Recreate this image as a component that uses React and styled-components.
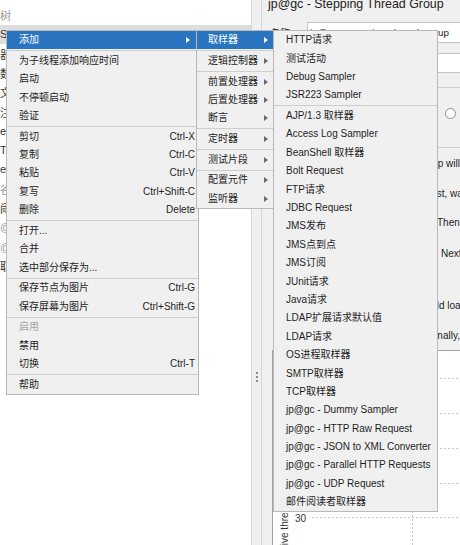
import React from "react";
import styled, { createGlobalStyle } from "styled-components";

const GlobalStyle = createGlobalStyle`
  html, body {
    margin: 0;
    padding: 0;
    background: #fff;
  }
  body {
    font-family: "Liberation Sans", "Noto Sans CJK SC", sans-serif;
  }
`;

const treeRows = [
  { text: "树", muted: true },
  { text: "Stepping Thread Group", selected: true },
  { text: "器" },
  { text: "数" },
  { text: "文" },
  { text: "注" },
  { text: "ea" },
  { text: "T" },
  { text: "ea" },
  { text: "谷", muted: true },
  { text: "阈" },
  { text: "@", muted: true },
  { text: "@", muted: true },
  { text: "取" },
];

const scheduleLines = [
  { text: "This group will start", gap: 5, indent: 128 },
  { text: "First, wait for", gap: 10, indent: 157 },
  { text: "Then start", gap: 9, indent: 169 },
  { text: "Next, add", gap: 11, indent: 173 },
  { text: "Then hold load for", gap: 32, indent: 132 },
  { text: "Finally, stop", gap: 10, indent: 161 },
];

const contextMenu = [
  { label: "添加", arrow: true, active: true },
  "sep",
  { label: "为子线程添加响应时间" },
  { label: "启动" },
  { label: "不停顿启动" },
  { label: "验证" },
  "sep",
  { label: "剪切", shortcut: "Ctrl-X" },
  { label: "复制", shortcut: "Ctrl-C" },
  { label: "粘贴", shortcut: "Ctrl-V" },
  { label: "复写", shortcut: "Ctrl+Shift-C" },
  { label: "删除", shortcut: "Delete" },
  "sep",
  { label: "打开..." },
  { label: "合并" },
  { label: "选中部分保存为..." },
  "sep",
  { label: "保存节点为图片", shortcut: "Ctrl-G" },
  { label: "保存屏幕为图片", shortcut: "Ctrl+Shift-G" },
  "sep",
  { label: "启用", disabled: true },
  { label: "禁用" },
  { label: "切换", shortcut: "Ctrl-T" },
  "sep",
  { label: "帮助" },
];

const addMenu = [
  { label: "取样器", arrow: true, active: true },
  "sep",
  { label: "逻辑控制器", arrow: true },
  "sep",
  { label: "前置处理器", arrow: true },
  { label: "后置处理器", arrow: true },
  { label: "断言", arrow: true },
  "sep",
  { label: "定时器", arrow: true },
  "sep",
  { label: "测试片段", arrow: true },
  "sep",
  { label: "配置元件", arrow: true },
  { label: "监听器", arrow: true },
];

const samplerMenu = [
  { label: "HTTP请求" },
  { label: "测试活动" },
  { label: "Debug Sampler" },
  { label: "JSR223 Sampler" },
  "sep",
  { label: "AJP/1.3 取样器" },
  { label: "Access Log Sampler" },
  { label: "BeanShell 取样器" },
  { label: "Bolt Request" },
  { label: "FTP请求" },
  { label: "JDBC Request" },
  { label: "JMS发布" },
  { label: "JMS点到点" },
  { label: "JMS订阅" },
  { label: "JUnit请求" },
  { label: "Java请求" },
  { label: "LDAP扩展请求默认值" },
  { label: "LDAP请求" },
  { label: "OS进程取样器" },
  { label: "SMTP取样器" },
  { label: "TCP取样器" },
  { label: "jp@gc - Dummy Sampler" },
  { label: "jp@gc - HTTP Raw Request" },
  { label: "jp@gc - JSON to XML Converter" },
  { label: "jp@gc - Parallel HTTP Requests" },
  { label: "jp@gc - UDP Request" },
  { label: "邮件阅读者取样器" },
];

const gridRows = [27, 62, 97, 132, 166];

const Screen = styled.div`
  position: relative;
  width: 460px;
  height: 545px;
  overflow: hidden;
  display: flex;
  font-size: 10px;
  color: #1e1e1e;
`;

const TreePanel = styled.div`
  box-sizing: border-box;
  width: 252px;
  flex-shrink: 0;
  padding-top: 5.4px;
  background: #fff;
  border-right: 1px solid #d6d6d6;
`;

const TreeRow = styled.div`
  height: 19.3px;
  display: flex;
  align-items: center;
  font-size: 11px;
  white-space: nowrap;
  color: ${(p) => (p.$muted ? "#9a9a9a" : "#333")};
  background: ${(p) => (p.$selected ? "#dddddd" : "transparent")};
`;

const SplitHandle = styled.div`
  box-sizing: border-box;
  width: 10px;
  flex-shrink: 0;
  display: flex;
  flex-direction: column;
  align-items: center;
  padding-top: 372px;
  background: #f0f0f0;
  border-right: 1px solid #d6d6d6;
`;

const Grip = styled.span`
  width: 2px;
  height: 2px;
  background: #8c8c8c;
  box-shadow: 0 4px 0 #8c8c8c, 0 8px 0 #8c8c8c;
`;

const Editor = styled.div`
  flex: 1;
  min-width: 0;
  display: flex;
  flex-direction: column;
  padding-left: 6px;
  background: #f0f0f0;
`;

const EditorTitle = styled.div`
  margin-top: -3px;
  height: 14px;
  line-height: 14px;
  font-size: 12.4px;
  color: #222;
  white-space: nowrap;
  flex-shrink: 0;
`;

const FieldRow = styled.div`
  display: flex;
  align-items: center;
  flex-shrink: 0;
  margin-top: ${(p) => p.$gap}px;
  height: ${(p) => p.$h}px;
`;

const FieldLabel = styled.span`
  box-sizing: border-box;
  width: 39px;
  flex-shrink: 0;
  padding-left: 2px;
  color: #222;
`;

const TextField = styled.div`
  box-sizing: border-box;
  width: 300px;
  height: 100%;
  flex-shrink: 0;
  display: flex;
  align-items: center;
  padding-left: 2px;
  background: #fff;
  border: 1px solid #c4c4c4;
  font-size: 9.8px;
  color: #222;
  white-space: nowrap;
`;

const GroupBox = styled.div`
  box-sizing: border-box;
  width: 400px;
  height: 61px;
  flex-shrink: 0;
  margin-top: 14px;
  padding: 20px 0 0 176px;
  border: 1px solid #cfcfcf;
`;

const Radio = styled.span`
  display: block;
  box-sizing: border-box;
  width: 11px;
  height: 11px;
  border-radius: 50%;
  border: 1px solid #8e8e8e;
  background: #fff;
`;

const ScheduleLine = styled.div`
  height: 20px;
  flex-shrink: 0;
  display: flex;
  align-items: center;
  margin-top: ${(p) => p.$gap}px;
  padding-left: ${(p) => p.$indent}px;
  color: #222;
  white-space: nowrap;
`;

const ChartBox = styled.div`
  flex: 1;
  width: 300px;
  margin: 5px 0 0 4px;
  background: #fff;
  border-top: 1px solid #a2a2a2;
  border-left: 1px solid #a2a2a2;
`;

const ChartSvg = styled.svg`
  display: block;
  font-family: "Liberation Sans", sans-serif;
`;

const Cascade = styled.div`
  position: absolute;
  left: 6px;
  top: 30px;
  display: flex;
  align-items: flex-start;
`;

const Menu = styled.div`
  box-sizing: border-box;
  flex-shrink: 0;
  width: ${(p) => p.$w}px;
  margin-left: ${(p) => -p.$overlap}px;
  background: #f0f0f0;
  border: 1px solid #b9b9b9;
`;

const Item = styled.div`
  height: 18.4px;
  display: flex;
  align-items: center;
  padding: 0 3px 0 ${(p) => p.$indent}px;
  line-height: 1;
  white-space: nowrap;
  background: ${(p) => (p.$active ? "#2a75c0" : "transparent")};
  color: ${(p) => (p.$active ? "#fff" : p.$disabled ? "#a3a3a3" : "#1e1e1e")};
`;

const Shortcut = styled.span`
  margin-left: auto;
`;

const Arrow = styled.span`
  margin-left: auto;
  margin-right: ${(p) => p.$gap}px;
  width: 0;
  height: 0;
  border-left: 4px solid ${(p) => (p.$active ? "#fff" : "#6b6b6b")};
  border-top: 3.5px solid transparent;
  border-bottom: 3.5px solid transparent;
`;

const Separator = styled.div`
  height: 1px;
  margin: 0.65px 0;
  background: #cdcdcd;
`;

const PopupMenu = ({ items, width, overlap = 0, indent, arrowGap = 0 }) => (
  <Menu $w={width} $overlap={overlap}>
    {items.map((it, i) =>
      it === "sep" ? (
        <Separator key={i} />
      ) : (
        <Item
          key={i}
          $indent={indent}
          $active={it.active}
          $disabled={it.disabled}
        >
          <span>{it.label}</span>
          {it.shortcut && <Shortcut>{it.shortcut}</Shortcut>}
          {it.arrow && <Arrow $gap={arrowGap} $active={it.active} />}
        </Item>
      )
    )}
  </Menu>
);

const App = () => {
  return (
    <>
      <GlobalStyle />
      <Screen>
        <TreePanel>
          {treeRows.map((r, i) => (
            <TreeRow key={i} $muted={r.muted} $selected={r.selected}>
              {r.text}
            </TreeRow>
          ))}
        </TreePanel>

        <SplitHandle>
          <Grip />
        </SplitHandle>

        <Editor>
          <EditorTitle>jp@gc - Stepping Thread Group</EditorTitle>
          <FieldRow $gap={11} $h={21}>
            <FieldLabel>名称:</FieldLabel>
            <TextField>jp@gc - Stepping Thread Group</TextField>
          </FieldRow>
          <FieldRow $gap={10} $h={20}>
            <FieldLabel>注释:</FieldLabel>
            <TextField />
          </FieldRow>
          <GroupBox>
            <Radio />
          </GroupBox>
          {scheduleLines.map((l, i) => (
            <ScheduleLine key={i} $gap={l.gap} $indent={l.indent}>
              {l.text}
            </ScheduleLine>
          ))}
          <ChartBox>
            <ChartSvg width="200" height="200">
              {gridRows.map((y) => (
                <line
                  key={y}
                  x1="39"
                  x2="200"
                  y1={y + 0.5}
                  y2={y + 0.5}
                  stroke="#c6c6c6"
                  strokeDasharray="2 2"
                />
              ))}
              <line
                x1="139.5"
                x2="139.5"
                y1="20"
                y2="200"
                stroke="#c6c6c6"
                strokeDasharray="2 2"
              />
              <text x="33" y="170.5" textAnchor="end" fontSize="10" fill="#333">
                30
              </text>
              <text
                transform="translate(15 257) rotate(-90)"
                fontSize="10"
                fill="#333"
              >
                Number of active threads
              </text>
            </ChartSvg>
          </ChartBox>
        </Editor>

        <Cascade>
          <PopupMenu items={contextMenu} width={193} indent={12} arrowGap={5} />
          <PopupMenu items={addMenu} width={78} overlap={3} indent={11} arrowGap={2} />
          <PopupMenu items={samplerMenu} width={165} overlap={1} indent={12} />
        </Cascade>
      </Screen>
    </>
  );
};

export default App;
